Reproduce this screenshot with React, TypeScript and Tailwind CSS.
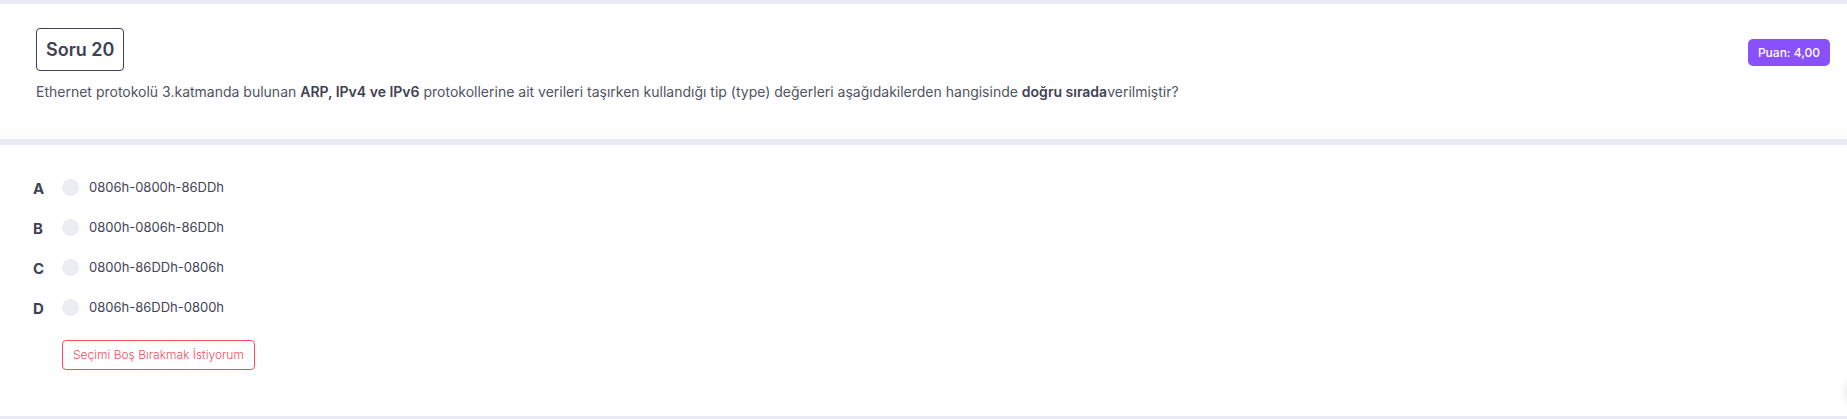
const options = [
  { letter: "A", value: "0806h-0800h-86DDh" },
  { letter: "B", value: "0800h-0806h-86DDh" },
  { letter: "C", value: "0800h-86DDh-0806h" },
  { letter: "D", value: "0806h-86DDh-0800h" },
];

function QuestionCard() {
  return (
    <section className="bg-gradient-to-b from-white from-80% to-[#fcfcfc] pt-6 pr-[17px] pb-9 pl-9">
      <div className="flex items-end justify-between">
        <h1 className="rounded border border-[#3f4254] px-[9px] py-[7px] text-[18px] leading-[27px] font-semibold">
          Soru 20
        </h1>
        <span className="mb-[5px] rounded-[5px] bg-[#8950fc] px-[10px] py-1 text-[12px] leading-[19px] font-medium text-white">
          Puan: 4,00
        </span>
      </div>
      <p className="pt-2.5 text-[14px] leading-[22px] text-[#50535f]">
        Ethernet protokolü 3.katmanda bulunan{" "}
        <b className="font-semibold text-[#3f4254]">ARP, IPv4 ve IPv6</b> protokollerine ait verileri
        taşırken kullandığı tip (type) değerleri aşağıdakilerden hangisinde{" "}
        <b className="font-semibold text-[#3f4254]">doğru sırada</b>verilmiştir?
      </p>
    </section>
  );
}

function AnswerCard() {
  return (
    <form className="relative overflow-hidden bg-white px-[33px] pt-[22px] pb-[46px]">
      <fieldset>
        {options.map(({ letter, value }) => (
          <label key={letter} className="flex h-10 cursor-pointer items-center">
            <span className="w-[29px] pt-1 text-[15px] leading-5 font-bold">{letter}</span>
            <input
              type="radio"
              name="answer"
              value={value}
              className="size-[17px] shrink-0 appearance-none rounded-full bg-[#ebedf3] checked:bg-[#8950fc]"
            />
            <span className="pl-2.5 text-[13px] leading-5">{value}</span>
          </label>
        ))}
      </fieldset>
      <button
        type="button"
        className="mt-[13px] ml-[29px] block rounded border border-[#f64e60] px-[10px] py-[5px] text-[12px] leading-[18px] font-light text-[#f64e60]"
      >
        Seçimi Boş Bırakmak İstiyorum
      </button>
      <div className="absolute -right-8 bottom-2 size-8 rounded-full shadow-[0_0_8px_rgba(0,0,0,0.15)]" />
    </form>
  );
}

export default function App() {
  return (
    <main className="flex flex-col gap-1.5 bg-[#e9eaf4] pt-1 pb-[3px] font-['Inter','Open_Sans',sans-serif] text-[#3f4254]">
      <QuestionCard />
      <AnswerCard />
    </main>
  );
}
